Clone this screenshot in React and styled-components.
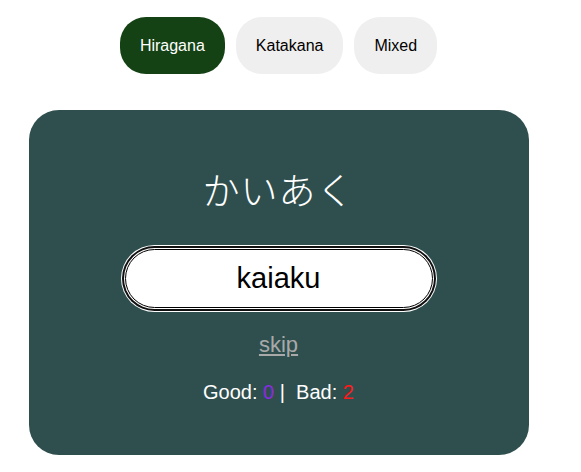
import React, { useState } from "react";
import styled, { createGlobalStyle } from "styled-components";

const GlobalStyle = createGlobalStyle`
  body {
    margin: 0;
    background: #ffffff;
    font-family: "Liberation Sans", Arial, sans-serif;
  }
`;

const Page = styled.div`
  width: 557px;
  display: flex;
  flex-direction: column;
  align-items: center;
  padding-top: 17px;
`;

const Modes = styled.div`
  display: flex;
  gap: 11px;
`;

const ModeButton = styled.button`
  font-family: "Liberation Sans", Arial, sans-serif;
  font-size: 16px;
  height: 57px;
  padding: 0 20px;
  border: none;
  border-radius: 26px;
  background: ${(p) => (p.active ? "#144214" : "#efefef")};
  color: ${(p) => (p.active ? "#ffffff" : "#000000")};
  cursor: pointer;
`;

const Card = styled.div`
  margin-top: 36px;
  width: 500px;
  box-sizing: border-box;
  background: #2f4f4f;
  border-radius: 30px;
  padding: 53px 0 51px;
  display: flex;
  flex-direction: column;
  align-items: center;
`;

const Kana = styled.div`
  font-family: "Noto Sans CJK JP", sans-serif;
  font-weight: 300;
  font-size: 37px;
  line-height: 53px;
  color: #ffffff;
  letter-spacing: 1px;
`;

const Answer = styled.input`
  margin-top: 33px;
  width: 308px;
  height: 59px;
  box-sizing: border-box;
  border: 1px solid #000;
  border-radius: 30px;
  box-shadow: 0 0 0 1px #fff, 0 0 0 3px #101010, 0 0 0 4px #fff;
  outline: none;
  background: #fff;
  text-align: center;
  font-family: "Liberation Sans", Arial, sans-serif;
  font-size: 29px;
  color: #000;
`;

const Skip = styled.a`
  margin-top: 24px;
  font-size: 22px;
  line-height: 25px;
  color: #a9a9a9;
  text-decoration: underline;
  cursor: pointer;
`;

const Score = styled.div`
  margin-top: 24px;
  font-size: 20px;
  line-height: 23px;
  color: #ffffff;
  white-space: pre;
`;

const Count = styled.span`
  color: ${(p) => p.color};
`;

export default function App() {
  const [mode, setMode] = useState("Hiragana");
  const [answer, setAnswer] = useState("kaiaku");

  return (
    <>
      <GlobalStyle />
      <Page>
        <Modes>
          {["Hiragana", "Katakana", "Mixed"].map((m) => (
            <ModeButton key={m} active={mode === m} onClick={() => setMode(m)}>
              {m}
            </ModeButton>
          ))}
        </Modes>
        <Card>
          <Kana>かいあく</Kana>
          <Answer value={answer} onChange={(e) => setAnswer(e.target.value)} />
          <Skip>skip</Skip>
          <Score>
            Good: <Count color="#8a2be2">0</Count> |  Bad: <Count color="#ff1a1a">2</Count>
          </Score>
        </Card>
      </Page>
    </>
  );
}
